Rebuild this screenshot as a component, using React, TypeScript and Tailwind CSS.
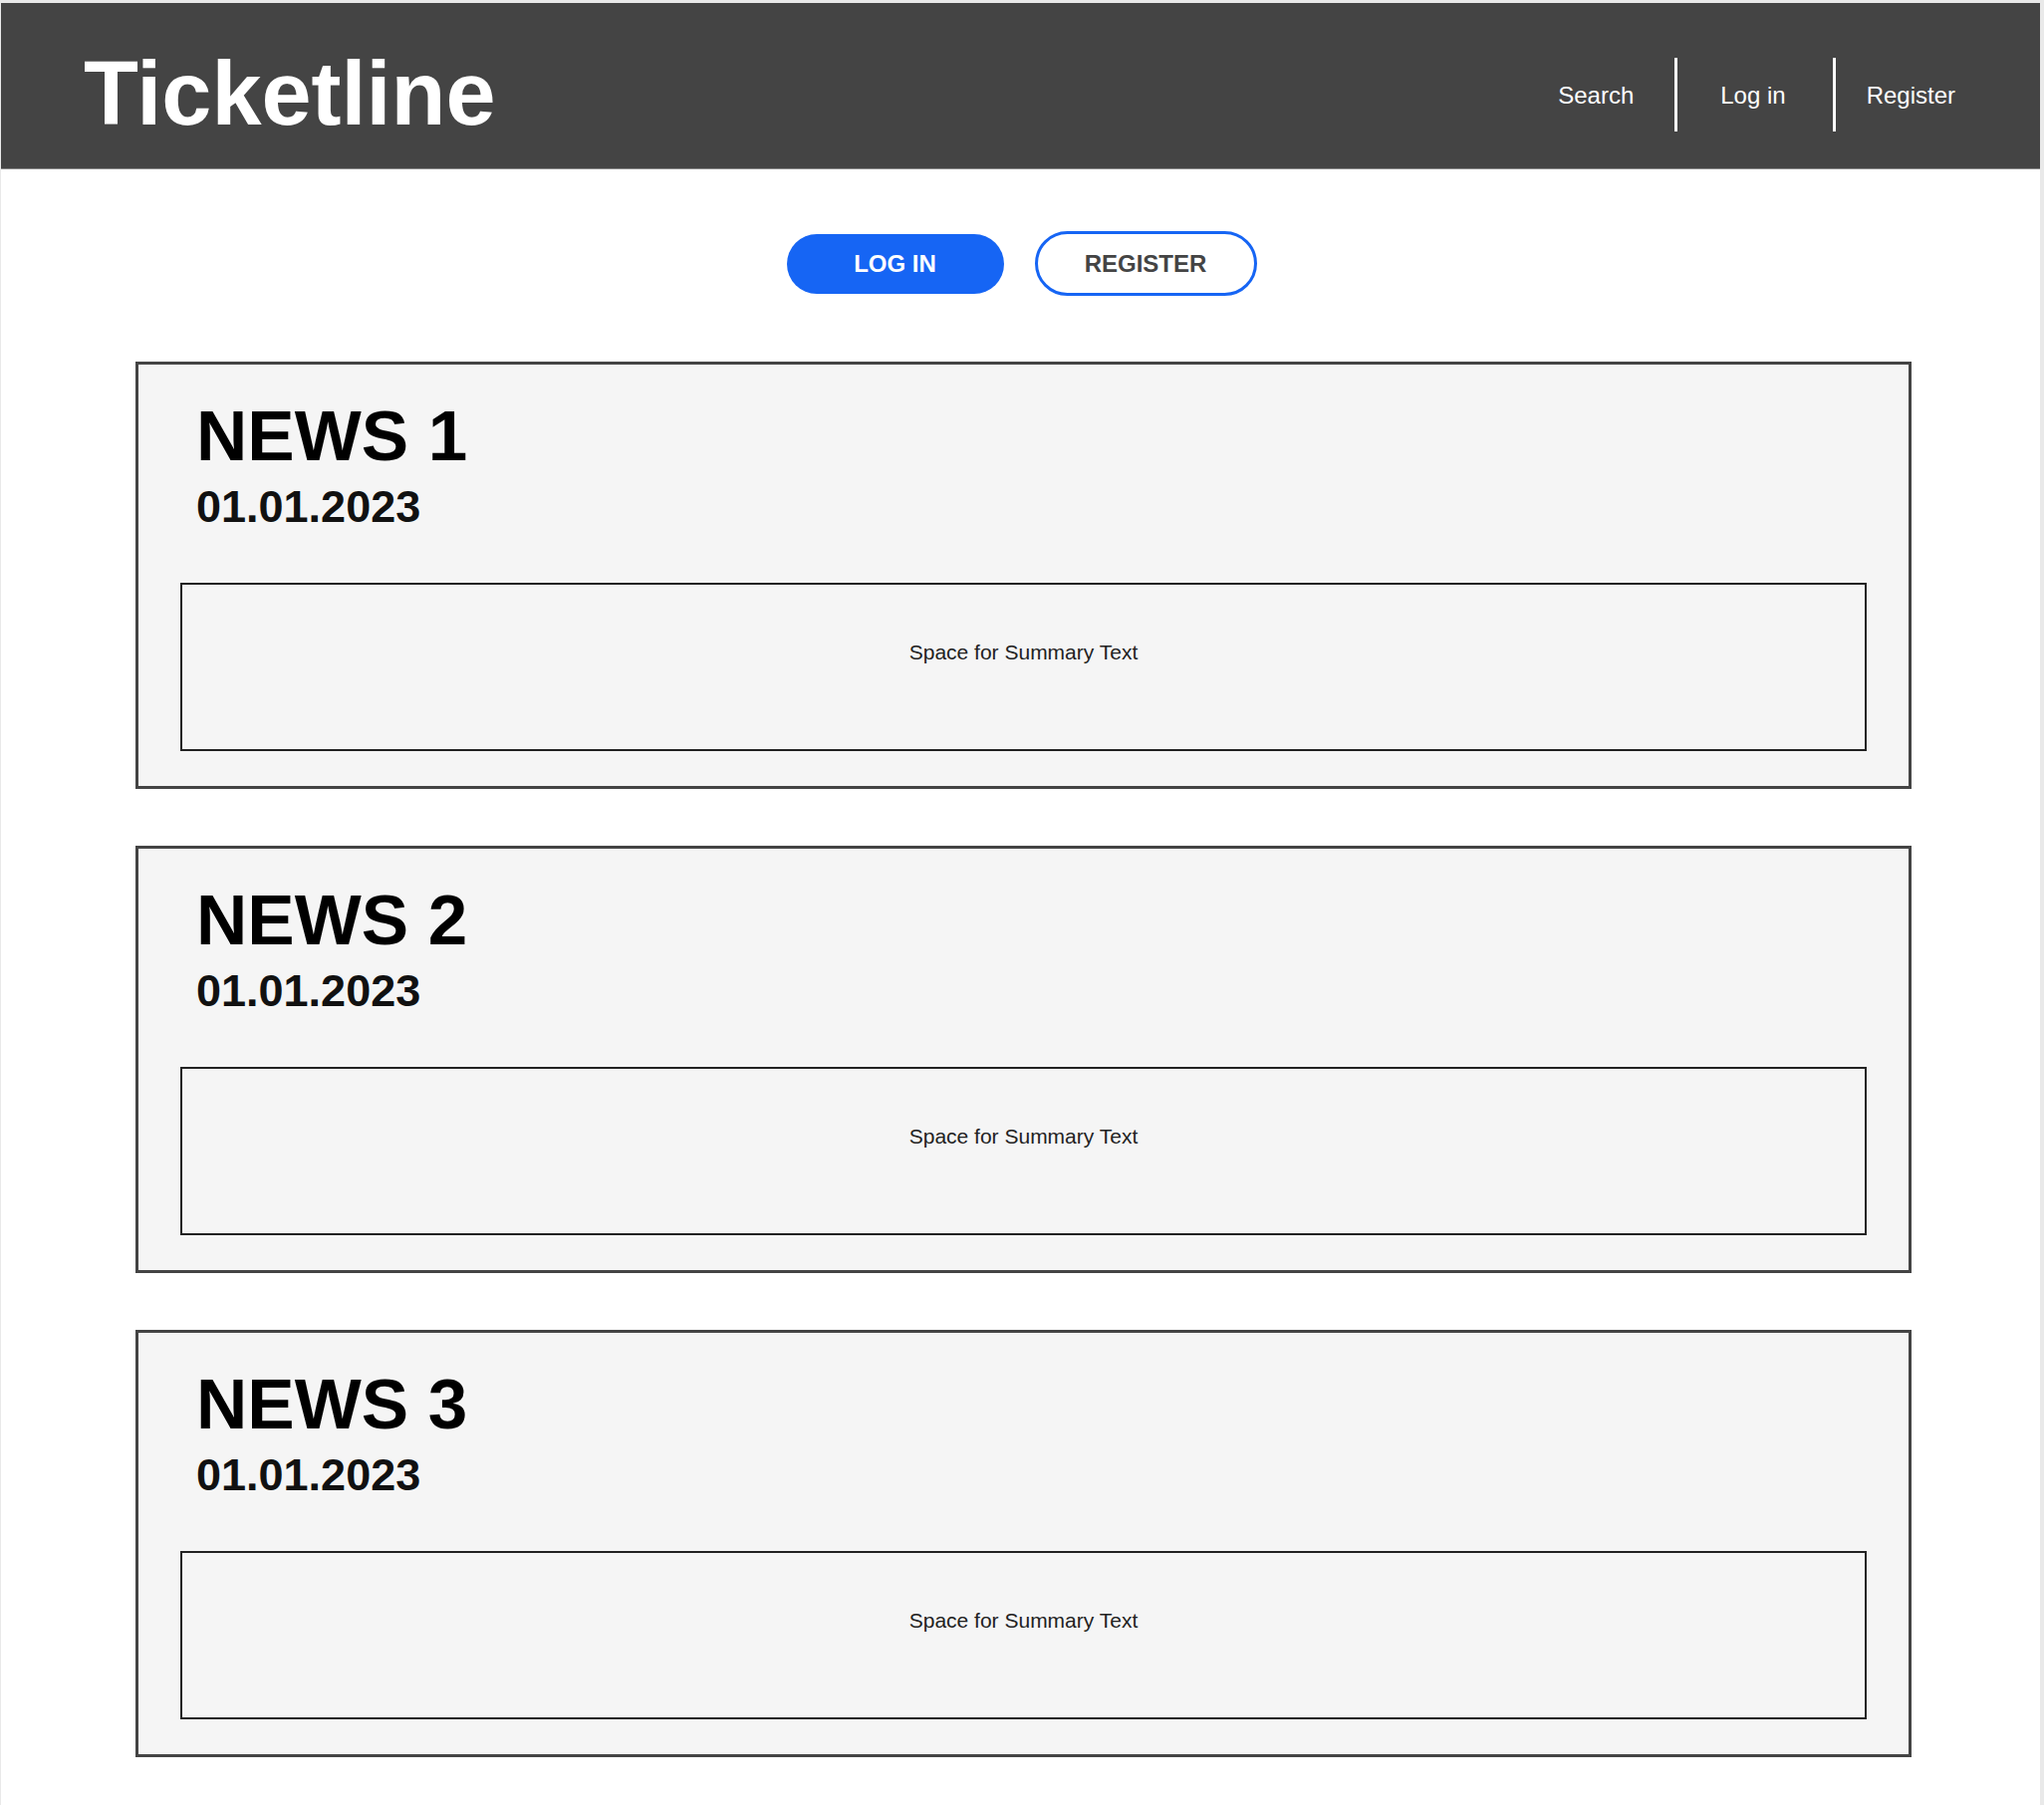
import React from 'react';

const news = [
  { title: 'NEWS 1', date: '01.01.2023' },
  { title: 'NEWS 2', date: '01.01.2023' },
  { title: 'NEWS 3', date: '01.01.2023' },
];

const NewsCard: React.FC<{ title: string; date: string }> = ({ title, date }) => (
  <div className="h-[429px] border-[3px] border-[#444] bg-[#f5f5f5] pt-[36px] flex flex-col">
    <div className="pl-[58px]">
      <h2 className="text-[71px] leading-none font-bold text-black">{title}</h2>
      <p className="mt-[13px] text-[45px] leading-none font-bold text-[#111]">{date}</p>
    </div>
    <div className="mt-[54px] mx-[42px] h-[169px] border-2 border-[#222] pt-[57px] text-center">
      <p className="text-[21px] leading-none text-[#222]">Space for Summary Text</p>
    </div>
  </div>
);

export default function App() {
  return (
    <div className="min-h-screen bg-white border-t-[3px] border-l border-r-4 border-[#e9e9e9] font-['Liberation_Sans',Arial,sans-serif]">
      <header className="h-[167px] bg-[#444] border-b border-[#8a8a8a] flex items-start justify-between">
        <h1 className="mt-[46px] pl-[83px] text-[90px] leading-none font-bold text-white">Ticketline</h1>
        <nav className="mt-[55px] pr-[85px] flex items-center text-[24px] text-white">
          <a className="mt-[2px] mr-[41px]">Search</a>
          <span className="w-[3px] h-[74px] bg-white" />
          <a className="mt-[2px] ml-[43px] mr-[47px]">Log in</a>
          <span className="w-[3px] h-[74px] bg-white" />
          <a className="mt-[2px] ml-[31px]">Register</a>
        </nav>
      </header>

      <div className="pt-[62px] pl-[2px] flex items-center justify-center gap-[31px]">
        <button className="w-[218px] h-[60px] rounded-full bg-[#1665f4] text-white text-[24px] font-bold">
          LOG IN
        </button>
        <button className="w-[223px] h-[65px] rounded-full border-[3px] border-[#1665f4] bg-white text-[#444] text-[24px] font-bold">
          REGISTER
        </button>
      </div>

      <main className="mt-[66px] ml-[135px] w-[1783px] flex flex-col gap-[57px] pb-[50px]">
        {news.map((n) => (
          <NewsCard key={n.title} title={n.title} date={n.date} />
        ))}
      </main>
    </div>
  );
}
